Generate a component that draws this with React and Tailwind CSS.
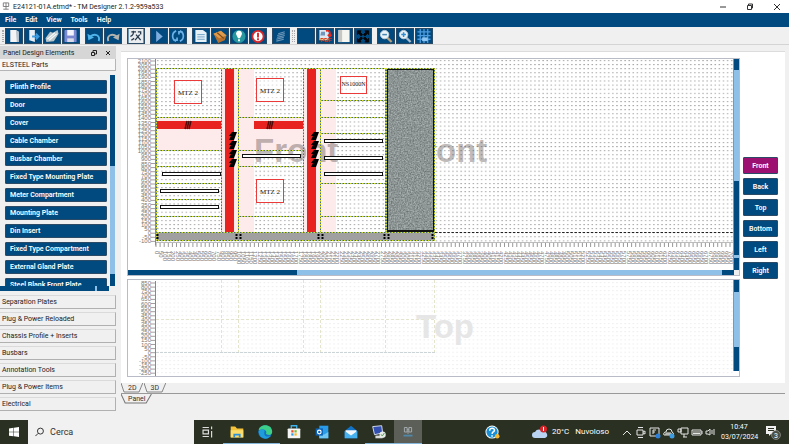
import { useState } from "react";

const parts = [
  "Plinth Profile",
  "Door",
  "Cover",
  "Cable Chamber",
  "Busbar Chamber",
  "Fixed Type Mounting Plate",
  "Meter Compartment",
  "Mounting Plate",
  "Din Insert",
  "Fixed Type Compartment",
  "External Gland Plate",
  "Steel Blank Front Plate",
];

const sections = [
  "Separation Plates",
  "Plug & Power Reloaded",
  "Chassis Profile + Inserts",
  "Busbars",
  "Annotation Tools",
  "Plug & Power Items",
  "Electrical",
];

const views = ["Front", "Back", "Top", "Bottom", "Left", "Right"];

// one grid step is 50 mm
const STEP = 4.1;
const range = (n) => Array.from({ length: n }, (_, i) => i);

const toolIcons = {
  "New": (
    <>
      <path d="M5 2h6l3 2v11H5z" fill="#f4f4f4" />
      <path d="M11 2l3 2v11h-2z" fill="#b9c4cc" />
    </>
  ),
  "Open": (
    <>
      <path d="M5 2h6v13l-6-2z" fill="#e8eef4" />
      <path d="M8 9h6M12 6l3 3-3 3" stroke="#3d9be0" strokeWidth="2" fill="none" />
    </>
  ),
  "Open folder": (
    <>
      <path d="M2 11l5-7 3 1 5-3 1 4-5 8-8 1z" fill="#b9c5c9" />
      <path d="M4 12l8-7M6 13l8-7" stroke="#f5f8f9" strokeWidth="1.4" />
    </>
  ),
  "Save": (
    <>
      <rect x="2" y="2" width="13" height="13" rx="1" fill="#7c88cf" />
      <rect x="5" y="2" width="7" height="6" fill="#f3f4fb" />
      <rect x="5" y="11" width="7" height="4" fill="#d9dce8" />
    </>
  ),
  "Undo": (
    <>
      <path d="M14 14c2-6-4-9-9-5" stroke="#4eb4ea" strokeWidth="2" fill="none" />
      <path d="M2 6l1 7 6-3z" fill="#4eb4ea" />
    </>
  ),
  "Redo": (
    <>
      <path d="M4 14c-2-6 4-9 9-5" stroke="#b3b3ad" strokeWidth="2" fill="none" />
      <path d="M16 6l-1 7-6-3z" fill="#b3b3ad" />
    </>
  ),
  "Translate": (
    <>
      <rect x="1" y="1" width="16" height="15" fill="#e9edf0" />
      <path d="M4 4h5M6 3c1 4-1 5-3 6M9 7l5 6M13 7l-5 6M4 13l3-2M11 4h3v3" stroke="#26394b" strokeWidth="1.4" fill="none" />
    </>
  ),
  "Run": <path d="M6 3l7 6-7 6z" fill="#7faede" />,
  "Refresh": (
    <path d="M7 3c-5 2-5 9 0 11M11 14c5-2 5-9 0-11M4 13h4v-3M14 4h-4v3" stroke="#6bb0e6" strokeWidth="1.8" fill="none" />
  ),
  "Report": (
    <>
      <path d="M3 2h8l4 3v10H3z" fill="#e6f0f7" />
      <path d="M5 7h8M5 9.500h8M5 12h8" stroke="#6a9fc4" strokeWidth="1" />
    </>
  ),
  "Package": (
    <>
      <path d="M2 6l8-3 6 5-2 5-7 3z" fill="#b8712c" />
      <path d="M2 6l8-3 6 5-8 3z" fill="#dd9a4c" />
      <path d="M6 5l7 6" stroke="#7a4616" strokeWidth="1.2" />
    </>
  ),
  "Hint": (
    <>
      <circle cx="9" cy="9" r="7" fill="#26979f" />
      <path d="M9 3a3 3 0 0 1 3 4l-2 4H8L6 7a3 3 0 0 1 3-4z" fill="#fff" />
      <path d="M8 12h2v2H8z" fill="#fff" />
    </>
  ),
  "Errors": (
    <>
      <circle cx="9" cy="9" r="6" fill="#fff" stroke="#d4262b" strokeWidth="2" />
      <path d="M9 5v5M9 11v2" stroke="#d4262b" strokeWidth="2" />
    </>
  ),
  "Layers": <path d="M6 6l7-2M5 8l8-2M5 10l8-2M4 12l8-2M4 14l8-2" stroke="#6c97b8" strokeWidth="1.2" />,
  "Blank": null,
  "Export PDF": (
    <>
      <path d="M3 2h8l2 2v9H3z" fill="#dfe8f1" />
      <path d="M4 8h5V4H5z" fill="#6f96bc" />
      <path d="M10 3c4-1 5 2 4 5M12 7l2 2 2-2" stroke="#e02a20" strokeWidth="1.800" fill="none" />
      <text x="4" y="15" fontSize="6" fontWeight="700" fill="#e02a20" fontFamily="Liberation Sans, sans-serif">PDF</text>
    </>
  ),
  "Split view": (
    <>
      <rect x="3" y="2" width="12" height="13" fill="#f5f5f2" />
      <rect x="3" y="2" width="4" height="13" fill="#c6c6c2" />
    </>
  ),
  "Fit to window": (
    <path
      d="M3 3h4L5.800 4.300 8.500 7 7 8.500 4.300 5.800 3 7zM15 3v4l-1.300-1.200L11 8.500 9.500 7l2.700-2.700L11 3zM3 15v-4l1.300 1.200L7 9.500 8.500 11l-2.700 2.700L7 15zM15 15h-4l1.200-1.300L9.500 11 11 9.500l2.700 2.700L15 11z"
      fill="#05080c"
      stroke="#05080c"
    />
  ),
  "Zoom out": (
    <>
      <path d="M10 10l5 5" stroke="#b9a07c" strokeWidth="2.4" />
      <circle cx="7.500" cy="7" r="4.500" fill="#e9f3fa" stroke="#c3ced6" />
      <path d="M5 7h5" stroke="#4a86b4" strokeWidth="1.600" />
    </>
  ),
  "Zoom in": (
    <>
      <path d="M10 10l5 5" stroke="#a8bccb" strokeWidth="2.4" />
      <circle cx="7.500" cy="7" r="4.500" fill="#e9f3fa" stroke="#c3ced6" />
      <path d="M5 7h5M7.500 4.500v5" stroke="#2f8ed1" strokeWidth="1.600" />
    </>
  ),
  "Grid": (
    <>
      <path d="M5 1v15M9 1v15M13 1v15M2 4h14M2 8h14M2 12h14" stroke="#4a9be0" strokeWidth="1.400" />
      <rect x="7" y="10" width="6" height="4" fill="#8cc4f2" />
    </>
  ),
};

const mainTools = [
  ["New", "Open", "Open folder", "Save"],
  ["Undo", "Redo"],
  ["Translate"],
  ["Run", "Refresh"],
  ["Report", "Package", "Hint", "Errors"],
  ["Layers"],
];

const viewTools = [
  ["Blank", "Export PDF", "Split view", "Fit to window"],
  ["Zoom out", "Zoom in", "Grid"],
];

function ToolGroups({ groups }) {
  return (
    <div className="flex gap-[5px]">
      {groups.map((group) => (
        <div key={group[0]} className="flex gap-px">
          {group.map((name) => (
            <button key={name} aria-label={name} className="h-4 w-[18px] border border-[#2a4a66] bg-[#004a80]">
              <svg viewBox="1 1 16 15" className="h-full w-full">{toolIcons[name]}</svg>
            </button>
          ))}
        </div>
      ))}
    </div>
  );
}

function TitleBar() {
  return (
    <header className="flex h-[13px] shrink-0 items-center bg-white pl-[2px] pr-1">
      <svg viewBox="0 0 8 10" className="h-[9px] w-2" fill="none" stroke="#777">
        <path d="M1 1h6v4H1zM4 1v7M1 8h6" />
      </svg>
      <h1 className="ml-[3px] flex-1 whitespace-nowrap text-[7px] leading-3 text-[#222]">
        E24121-01A.etmd* - TM Designer 2.1.2-959a533
      </h1>
      <div className="flex gap-[11px]">
        <button aria-label="Minimize" className="h-3 w-4">
          <svg viewBox="0 0 16 12"><path d="M5 6h6" stroke="#333" /></svg>
        </button>
        <button aria-label="Restore" className="h-3 w-4">
          <svg viewBox="0 0 16 12" fill="none" stroke="#333"><path d="M5.500 4.500h4v4h-4zM6.500 4.500v-1.500h4v4h-1" /></svg>
        </button>
        <button aria-label="Close" className="h-3 w-4">
          <svg viewBox="0 0 16 12" stroke="#333"><path d="M5 3l6 6M11 3l-6 6" /></svg>
        </button>
      </div>
    </header>
  );
}

function Sidebar() {
  return (
    <aside className="flex w-[116px] shrink-0 flex-col pt-px text-[7px] leading-[10px] text-[#222]">
      <div className="flex h-[13px] items-center bg-[#d6d6d6] pl-[3px] pr-1">
        <h2 className="flex-1 whitespace-nowrap">Panel Design Elements</h2>
        <button aria-label="Float panel" className="mr-[6px] h-2 w-2">
          <svg viewBox="0 0 8 8" fill="none" stroke="#222"><path d="M1.500 3.500h3v3h-3zM3 3V1.500h3.500V5H5" /></svg>
        </button>
        <button aria-label="Close panel" className="h-2 w-2">
          <svg viewBox="0 0 8 8" stroke="#222"><path d="M2 2l4 4M6 2L2 6" /></svg>
        </button>
      </div>
      <button className="h-3 border-b border-r border-[#b5b5b5] bg-[#f7f7f7] pl-[2px] text-left">ELSTEEL Parts</button>
      <div className="mt-1 flex h-[211px]">
        <div className="flex-1 overflow-hidden pl-[5px] pr-[3px] pt-[5px]">
          <ul className="flex flex-col gap-1">
            {parts.map((part) => (
              <li key={part} className="flex">
                <button className="h-[14px] w-full whitespace-nowrap rounded-[1px] border border-[#2a4a66] bg-[#004a80] pl-1 text-left font-semibold leading-3 text-white">
                  {part}
                </button>
              </li>
            ))}
          </ul>
        </div>
        <div className="mr-px flex w-[5px] flex-col bg-[#004a80]">
          <div className="mt-[91px] h-[108px] bg-[#8fc1e8]" />
        </div>
      </div>
      <div className="mr-[7px] flex h-[5px] justify-end bg-[#004a80] pr-3">
        <div className="h-[5px] w-[2px] bg-[#8fc1e8]" />
      </div>
      <div className="mt-1 flex flex-col gap-[3px]">
        {sections.map((section) => (
          <button
            key={section}
            className="h-[14px] whitespace-nowrap border-b border-r border-t border-b-[#b0b0b0] border-r-[#b0b0b0] border-t-[#dadada] bg-[#f0f0f0] pl-[2px] text-left"
          >
            {section}
          </button>
        ))}
      </div>
    </aside>
  );
}

function VerticalRuler({ top, from, count }) {
  return (
    <g>
      {range(count).map((i) => (
        <g key={i}>
          <text x="151" y={top + i * STEP + 2} textAnchor="end" fontSize="6" fill="#777">
            {from - i * 50}
          </text>
          <path d={`M151 ${top + i * STEP}h4`} stroke="#777" strokeOpacity="0.7" />
        </g>
      ))}
      <path d={`M155.500 ${top - 2}V${top + count * STEP}`} stroke="#888" />
    </g>
  );
}

function Edge({ d }) {
  return (
    <>
      <path d={d} stroke="#466e70" fill="none" />
      <path d={d} stroke="#dde52a" strokeDasharray="1.500 1.500" fill="none" />
    </>
  );
}

const rails = [
  [162, 172, 58], [160, 189, 58], [160, 205, 58],
  [242, 154, 58], [324, 139, 58], [324, 156, 58], [324, 172, 58],
];

const devices = [
  { x: 174, y: 80, w: 28, h: 24, label: "MTZ 2", size: 7 },
  { x: 256, y: 78, w: 28, h: 24, label: "MTZ 2", size: 7 },
  { x: 256, y: 179, w: 28, h: 24, label: "MTZ 2", size: 7 },
  { x: 340, y: 76, w: 27, h: 18, label: "NS1000N", size: 6 },
];

function FrontDrawing() {
  return (
    <svg className="h-full w-full" fontFamily="Liberation Sans, Arial, sans-serif" role="img" aria-label="Front view">
      <defs>
        <pattern id="dots" x="156" y="60" width={STEP} height={STEP} patternUnits="userSpaceOnUse">
          <rect x="1" y="0" width="1.500" height="1" fill="#a4a4a4" />
        </pattern>
        <filter id="grain" colorInterpolationFilters="sRGB">
          <feTurbulence type="fractalNoise" baseFrequency="0.7" numOctaves="2" seed="4" />
          <feColorMatrix values="0.4 0 0 0 0.35  0.4 0 0 0 0.38  0.4 0 0 0 0.38  0 0 0 0 1" />
          <feComposite in2="SourceGraphic" operator="in" />
        </filter>
      </defs>
      <g transform="translate(-128 -59)">
        <VerticalRuler top={61} from={2100} count={45} />
        <rect x="156" y="59" width="100%" height="183" fill="url(#dots)" />
        <path d="M435 232.500H2000" stroke="#222" strokeDasharray="2.500 1.600" />

        <g fill="#fdeaea">
          <rect x="156" y="117" width="66" height="33" />
          <rect x="222" y="68" width="16" height="164" />
          <rect x="238" y="68" width="16" height="164" />
          <rect x="254" y="117" width="50" height="33" />
          <rect x="304" y="68" width="16" height="164" />
          <rect x="320" y="68" width="16" height="164" />
        </g>
        <g fill="#554c4c" fillOpacity="0.4" fontSize="33" fontWeight="700">
          <text x="254" y="162">Front</text>
          <text x="403" y="162">Front</text>
        </g>
        <g fill="#e8231f">
          <rect x="156" y="121" width="66" height="8" />
          <rect x="254" y="121" width="50" height="8" />
          <rect x="225" y="68" width="9" height="164" />
          <rect x="307" y="68" width="9" height="164" />
        </g>
        <path
          d="M185 129l2-8M187 129l2-8M189 129l2-8M267 129l2-8M269 129l2-8M271 129l2-8"
          stroke="#4a0c0a"
          strokeWidth="1.400"
        />
        {[228, 310].map((x) =>
          range(4).map((i) => (
            <path key={`${x}-${i}`} d={`M${x + 4} ${132 + i * 9}h5l-3 8h-5l2-4h-2z`} fill="#000" />
          ))
        )}
        {rails.map(([x, y, w]) => (
          <rect key={`${x}-${y}`} x={x + 0.5} y={y + 0.5} width={w} height="3" fill="#fff" stroke="#111" />
        ))}

        <Edge d="M156 68.500H435M156.500 68V232M221.500 68V232M238.500 68V232M303.500 68V232M320.500 68V232M385.500 68V232" />
        <Edge d="M156 117.500H222M156 150.500H222M156 166.500H222M156 183.500H222M156 199.500H222M156 216.500H222" />
        <Edge d="M238 117.500H304M238 150.500H304M238 166.500H304M238 216.500H304" />
        <Edge d="M320 100.500H386M320 117.500H386M320 133.500H386M320 183.500H386M320 216.500H386" />

        <rect x="387" y="69" width="48" height="163" fill="#888" filter="url(#grain)" />
        <rect x="387" y="69" width="47" height="162" fill="none" stroke="#111" strokeWidth="2" />
        <rect x="156" y="232" width="279" height="9" fill="#a0a0a0" />
        <Edge d="M386.500 68.500H434.500V240.500H156.500V232.500H434.500M386.500 68V232" />
        <path
          d="M157.500 234v6M236.500 234v6M240.500 234v6M318.500 234v6M322.500 234v6M384.500 234v6M388.500 234v6M432.500 234v6"
          stroke="#000"
          strokeWidth="2"
          strokeDasharray="2 1"
        />

        {devices.map(({ x, y, w, h, label, size }) => (
          <g key={`${x}-${y}`}>
            <rect x={x + 0.5} y={y + 0.5} width={w - 1} height={h - 1} fill="#fff" fillOpacity="0.5" stroke="#ea3a3a" />
            <text x={x + w / 2} y={size === 6 ? 86 : y + 15} fontSize={size} fontFamily="Liberation Serif, serif" textAnchor="middle" fill="#111">
              {label}
            </text>
          </g>
        ))}

        <path d="M156 242.500H2000" stroke="#bbb" />
        {range(141).map((i) => (
          <g key={i}>
            <path d={`M${156 + i * STEP} 243v4`} stroke="#999" />
            <text transform={`translate(${155 + i * STEP} 251) rotate(90)`} fontSize="6" fill="#777">
              {i * 50}
            </text>
          </g>
        ))}
      </g>
    </svg>
  );
}

function TopDrawing() {
  return (
    <svg className="h-full w-full" fontFamily="Liberation Sans, Arial, sans-serif" role="img" aria-label="Top view">
      <defs>
        <pattern id="lightDots" x="156" y="283" width={STEP} height={STEP} patternUnits="userSpaceOnUse">
          <rect x="1" y="0" width="1.600" height="1" fill="#ededed" />
        </pattern>
      </defs>
      <g transform="translate(-128 -281)">
        <VerticalRuler top={284} from={850} count={23} />
        <rect x="156" y="281" width="100%" height="100%" fill="url(#lightDots)" />
        <path d="M156 320.500H435M221.500 281V353M238.500 281V353M303.500 281V353M320.500 281V353M385.500 281V353M434.500 281V353" stroke="#e4e4cc" strokeDasharray="3 2" />
        <path d="M156 353.500H435" stroke="#ccd4d8" strokeDasharray="3 1" />
        <text x="416" y="339" fontSize="33" fontWeight="700" fill="#e6e6e6">Top</text>
      </g>
    </svg>
  );
}

function BottomTab({ label }) {
  return (
    <button role="tab" className="relative h-[10px] px-[7px] leading-[9px]">
      <svg viewBox="0 0 30 10" preserveAspectRatio="none" className="absolute inset-0 h-full w-full" fill="none" stroke="#777">
        <path d="M0 0l4 9h20l5-9" />
      </svg>
      <span className="relative">{label}</span>
    </button>
  );
}

function Workspace() {
  const [view, setView] = useState("Front");

  return (
    <main className="ml-[5px] mr-1 flex min-w-0 flex-1 flex-col pt-[6px]">
      <div className="flex min-h-0 flex-1 gap-[3px] border-t border-[#dcdcdc] bg-white pb-[6px] pl-[6px] pr-[7px] pt-[6px]">
        <div className="flex min-w-0 flex-1 flex-col gap-[3px]">
          <section className="flex min-h-0 flex-[219] flex-col border border-[#b9bcc6]">
            <div className="flex min-h-0 flex-1">
              <div className="min-w-0 flex-1 overflow-hidden">
                <FrontDrawing />
              </div>
              <div className="flex w-[6px] flex-col border-l border-[#8a94a0] bg-[#004a80]">
                <div className="mt-[11px] h-[111px] bg-[#8fc1e8]" />
                <div className="mt-[74px] h-[3px] bg-[#8fc1e8]" />
              </div>
            </div>
            <div className="flex h-[5px]">
              <div className="flex flex-1 bg-[#004a80] pr-3">
                <div className="w-[169px]" />
                <div className="flex-1 bg-[#8fc1e8]" />
              </div>
              <div className="w-[5px] bg-[#eee]" />
            </div>
          </section>
          <section className="flex min-h-0 flex-[97] border border-[#b9bcc6]">
            <div className="min-w-0 flex-1 overflow-hidden">
              <TopDrawing />
            </div>
            <div className="mb-[5px] flex w-[6px] flex-col border-l border-[#8a94a0] bg-[#004a80] py-3">
              <div className="mb-3 flex-1 bg-[#8fc1e8]" />
            </div>
          </section>
        </div>
        <nav className="flex w-[35px] flex-col gap-1 pt-[99px]">
          {views.map((name) => (
            <button
              key={name}
              onClick={() => setView(name)}
              className={`h-[17px] rounded-[1px] border border-[#2a4a66] text-[7px] font-semibold leading-3 text-white ${
                view === name ? "bg-[#9b1070]" : "bg-[#004a80]"
              }`}
            >
              {name}
            </button>
          ))}
        </nav>
      </div>
      <div role="tablist" aria-label="Dimension" className="flex h-[11px] shrink-0 border-b border-[#999] text-[7px] text-[#333]">
        <BottomTab label="2D" />
        <BottomTab label="3D" />
      </div>
      <div role="tablist" aria-label="Sheet" className="flex h-[26px] shrink-0 text-[7px] text-[#333]">
        <BottomTab label="Panel" />
      </div>
    </main>
  );
}

const apps = [
  { name: "Task View", icon: <path d="M4 5h7M4 15h7M4.500 8h6v4h-6zM14 4v3M14 9v7" fill="none" stroke="#ddd" strokeWidth="1.300" /> },
  {
    name: "File Explorer",
    open: true,
    icon: (
      <>
        <path d="M3 4h5l2 2h7v10H3z" fill="#f5c33b" />
        <path d="M3 8h14v8H3z" fill="#fcdc6c" />
        <path d="M6 16v-4h8v4h-2v-2H8v2z" fill="#2d8fd8" />
      </>
    ),
  },
  {
    name: "Edge",
    open: true,
    icon: (
      <>
        <circle cx="10" cy="10" r="7.500" fill="#1572c4" />
        <path d="M3 8c1-7 15-8 15 2 0 4-5 4-7 2 2-3-2-6-8-4z" fill="#3ccf8a" />
        <path d="M3 9c4-4 8-1 6 2 0 4 4 5 8 3-4 6-14 4-14-5z" fill="#1e9cdb" />
      </>
    ),
  },
  {
    name: "Store",
    icon: (
      <>
        <path d="M7 6V3h6v3" fill="none" stroke="#3db2ec" strokeWidth="1.500" />
        <rect x="3" y="6" width="14" height="11" rx="1" fill="#f4f4f4" />
        <path d="M7 8h2.500v2.500H7z" fill="#ee4b2b" /><path d="M10.500 8H13v2.500h-2.500z" fill="#7cb82f" />
        <path d="M7 11.500h2.500V14H7z" fill="#2d9be8" /><path d="M10.500 11.500H13V14h-2.500z" fill="#f5b91f" />
      </>
    ),
  },
  {
    name: "Outlook",
    icon: (
      <>
        <rect x="7" y="3" width="10" height="14" fill="#2a9be6" />
        <path d="M7 10l5 3 5-3v7H7z" fill="#70c6f5" />
        <rect x="3" y="6" width="8" height="8" fill="#0b63b8" />
        <circle cx="7" cy="10" r="2" fill="none" stroke="#fff" strokeWidth="1.300" />
      </>
    ),
  },
  {
    name: "Mail",
    icon: (
      <>
        <path d="M3 9l7-6 7 6v8H3z" fill="#1173c7" />
        <path d="M4 8h12v3l-6 4-6-4z" fill="#f3f7fb" />
        <path d="M3 9l7 5 7-5v8H3z" fill="#47b1ef" />
      </>
    ),
  },
  {
    name: "Remote session",
    open: true,
    icon: (
      <>
        <path d="M3 4l10-1 1 8-9 2z" fill="#3350b0" stroke="#dfe5f5" />
        <path d="M6 14h8v3H6z" fill="#dadada" />
        <circle cx="14" cy="13" r="3.500" fill="#e8ece8" />
        <path d="M12 13l2 1 2-3" stroke="#3a8f3a" fill="none" />
      </>
    ),
  },
  {
    name: "TM Designer",
    active: true,
    icon: (
      <>
        <path d="M6 5h3v5H6zM11 5h3v5h-3zM9 7h2M10 8v4" fill="none" stroke="#a8b0b4" />
        <path d="M5 14h10" stroke="#4f88a8" strokeWidth="2" />
      </>
    ),
  },
];

const tray = [
  { name: "Hidden icons", d: "M3 10l4-4 4 4" },
  { name: "Meet now", d: "M3 5h6v5H3zM9 7l2-1v3l-2-1M4 2.500h5M4 12.500h5" },
  { name: "Security", d: "M2 3h9v8H2zM5 9V5h3M5 7h2", dot: "#2d7fd8" },
  { name: "OneDrive", d: "M2 10a2 2 0 0 1 2-3 3 3 0 0 1 6 0 2 2 0 0 1 1 3zM3 9h7M4 8h5", dot: "#3d9be0" },
  { name: "Network", d: "M5 3h7v6H5zM2 4h3v3H2zM7 12h4M8 9v3" },
  { name: "Battery", d: "M2 5h9v5H2zM3 7h7M3 8.500h7M12 6v3" },
  { name: "Volume", d: "M2 6h2l2-2v6L4 9H2zM8 5v4M10 4v6" },
];

function Taskbar() {
  return (
    <footer className="flex h-6 shrink-0 items-stretch bg-[#2a3122] text-white">
      <button aria-label="Start" className="flex w-7 items-center justify-center">
        <svg viewBox="0 0 10 10" className="h-[10px] w-[10px]" fill="#fff">
          <path d="M0 1.400l4.500-.6v4H0zM5 .700L10 0v4.800H5zM0 5.300h4.500v4L0 8.700zM5 5.300h5V10l-5-.7z" />
        </svg>
      </button>
      <label className="flex w-[166px] items-center gap-[6px] bg-[#f1f1f1] pl-[7px]">
        <svg viewBox="0 0 10 10" className="h-[10px] w-[10px]" fill="none" stroke="#222">
          <circle cx="6" cy="4" r="3.300" />
          <path d="M3.500 6.500L.5 9.500" />
        </svg>
        <input
          type="search"
          aria-label="Cerca"
          placeholder="Cerca"
          className="w-full bg-transparent text-[9px] leading-3 outline-none placeholder:text-[#333]"
        />
      </label>
      <div className="flex w-[228px]">
        {apps.map((app) => (
          <button
            key={app.name}
            aria-label={app.name}
            className={`flex flex-1 items-center justify-center border-b ${
              app.active ? "bg-[#5c5f58]" : ""
            } ${app.open || app.active ? "border-[#86b8dd]" : "border-transparent"}`}
          >
            <svg viewBox="0 0 20 20" className="h-[18px] w-[18px]">{app.icon}</svg>
          </button>
        ))}
      </div>
      <div className="flex flex-1 items-center justify-end">
        <button aria-label="Help" className="mr-[32px]">
          <svg viewBox="0 0 16 16" className="h-[15px] w-[15px]">
            <circle cx="7.500" cy="7.500" r="7" fill="#fff" />
            <circle cx="7.500" cy="7.500" r="6" fill="#1a8fd6" />
            <path d="M5 6c0-4 6-3 5 0-1 2-2 1-2.500 3.500M7.500 11v1.500" stroke="#fff" strokeWidth="1.600" fill="none" />
            <circle cx="13" cy="12" r="2.500" fill="#f5b731" />
          </svg>
        </button>
        <button className="flex items-center whitespace-nowrap text-[8px] leading-3">
          <svg viewBox="0 0 16 14" className="mr-1 h-[14px] w-4">
            <path d="M3 13a3 3 0 0 1 0-6 4.500 4.500 0 0 1 8 0 3 3 0 0 1 2 6z" fill="#b9d3f2" />
            <circle cx="11.500" cy="4" r="3.500" fill="#d8262b" />
            <path d="M11.500 2v4" stroke="#fff" />
          </svg>
          <span className="mr-[6px]">20°C</span>
          <span>Nuvoloso</span>
        </button>
        <div className="ml-[11px] flex">
          {tray.map((item) => (
            <button key={item.name} aria-label={item.name} className="w-[14px]">
              <svg viewBox="0 0 14 14" className="h-[14px] w-[14px]" fill="none" stroke="#e4e4e4">
                <path d={item.d} />
                {item.dot && <circle cx="10" cy="11" r="2.500" fill={item.dot} stroke="none" />}
              </svg>
            </button>
          ))}
        </div>
        <time className="ml-[3px] w-9 whitespace-nowrap text-center text-[7px] leading-[10px]">
          10:47
          <br />
          03/07/2024
        </time>
        <button aria-label="Notifications" className="ml-2 mr-2">
          <svg viewBox="0 0 16 16" className="h-4 w-4">
            <path d="M1 2h10v8H6l-2 2v-2H1z" fill="#f0f0f0" />
            <path d="M3 4.500h6M3 6.500h6" stroke="#2a3122" />
            <circle cx="11" cy="11" r="4.500" fill="#4a5046" stroke="#bbb" strokeWidth="0.500" />
            <text x="9" y="14" fontSize="7" fill="#fff" fontFamily="Roboto, sans-serif">3</text>
          </svg>
        </button>
      </div>
    </footer>
  );
}

function App() {
  return (
    <div className="flex h-screen flex-col overflow-hidden bg-[#f0f0f0] font-['Roboto','Open_Sans',sans-serif]">
      <TitleBar />
      <nav className="flex h-[14px] shrink-0 items-center gap-[9px] bg-[#004a80] pl-[5px] text-[7px] font-semibold leading-3 text-white">
        {["File", "Edit", "View", "Tools", "Help"].map((item) => (
          <button key={item}>{item}</button>
        ))}
      </nav>
      <div className="flex h-[18px] shrink-0 items-center border-b border-[#d4d4d4]">
        <div className="ml-[2px] mr-px h-3 w-[2px] border-x border-dotted border-[#aaa]" />
        <ToolGroups groups={mainTools} />
        <div className="ml-[2px] mr-[2px] h-3 w-[3px] border-x border-dotted border-[#aaa]" />
        <ToolGroups groups={viewTools} />
      </div>
      <div className="flex min-h-0 flex-1">
        <Sidebar />
        <Workspace />
      </div>
      <Taskbar />
    </div>
  );
}

export default App;
